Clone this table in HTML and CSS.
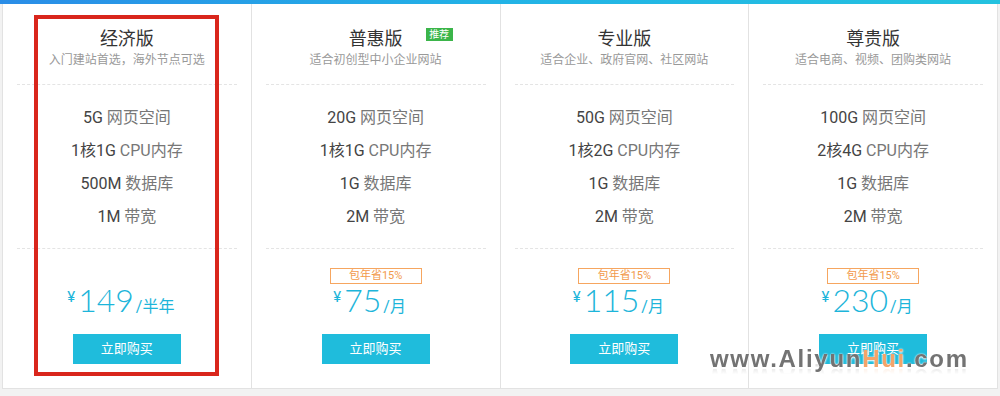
FILE: index.html
```html
<!DOCTYPE html>
<html lang="zh-CN">
<head>
<meta charset="utf-8">
<title>虚拟主机价格</title>
<link rel="stylesheet" href="styles.css">
</head>
<body>
<div class="page">
  <div class="topbar"></div>
  <div class="plans">
    <div class="plan">
      <h2 class="title">经济版</h2>
      <p class="sub">入门建站首选，海外节点可选</p>
      <div class="divider"></div>
      <ul class="features">
        <li><b>5G</b> 网页空间</li>
        <li><b>1核1G</b> CPU内存</li>
        <li><b>500M</b> 数据库</li>
        <li><b>1M</b> 带宽</li>
      </ul>
      <div class="divider"></div>
      <div class="badge-row"><span class="save hidden">包年省15%</span></div>
      <div class="price"><span class="cur">¥</span><span class="amt">149</span><span class="unit">/半年</span></div>
      <a class="buy" href="#">立即购买</a>
    </div>
    <div class="plan">
      <h2 class="title">普惠版<span class="rec">推荐</span></h2>
      <p class="sub">适合初创型中小企业网站</p>
      <div class="divider"></div>
      <ul class="features">
        <li><b>20G</b> 网页空间</li>
        <li><b>1核1G</b> CPU内存</li>
        <li><b>1G</b> 数据库</li>
        <li><b>2M</b> 带宽</li>
      </ul>
      <div class="divider"></div>
      <div class="badge-row"><span class="save">包年省15%</span></div>
      <div class="price"><span class="cur">¥</span><span class="amt">75</span><span class="unit">/月</span></div>
      <a class="buy" href="#">立即购买</a>
    </div>
    <div class="plan">
      <h2 class="title">专业版</h2>
      <p class="sub">适合企业、政府官网、社区网站</p>
      <div class="divider"></div>
      <ul class="features">
        <li><b>50G</b> 网页空间</li>
        <li><b>1核2G</b> CPU内存</li>
        <li><b>1G</b> 数据库</li>
        <li><b>2M</b> 带宽</li>
      </ul>
      <div class="divider"></div>
      <div class="badge-row"><span class="save">包年省15%</span></div>
      <div class="price"><span class="cur">¥</span><span class="amt">115</span><span class="unit">/月</span></div>
      <a class="buy" href="#">立即购买</a>
    </div>
    <div class="plan">
      <h2 class="title">尊贵版</h2>
      <p class="sub">适合电商、视频、团购类网站</p>
      <div class="divider"></div>
      <ul class="features">
        <li><b>100G</b> 网页空间</li>
        <li><b>2核4G</b> CPU内存</li>
        <li><b>1G</b> 数据库</li>
        <li><b>2M</b> 带宽</li>
      </ul>
      <div class="divider"></div>
      <div class="badge-row"><span class="save">包年省15%</span></div>
      <div class="price"><span class="cur">¥</span><span class="amt">230</span><span class="unit">/月</span></div>
      <a class="buy" href="#">立即购买</a>
    </div>
  </div>
  <div class="highlight"></div>
  <div class="watermark">www.Aliyun<span class="hui">Hui</span>.com</div>
</div>
</body>
</html>
```
FILE: styles.css
```css
* { box-sizing: border-box; }
html, body { margin: 0; padding: 0; }
body {
  background: #f2f2f2;
  font-family: "Helvetica Neue", Roboto, "Noto Sans CJK SC", sans-serif;
}
.page {
  position: relative;
  width: 1000px;
  height: 396px;
  background: #f2f2f2;
  overflow: hidden;
}
.topbar {
  height: 4px;
  background: linear-gradient(90deg, #2a8de7 0%, #22b3e6 50%, #24c2df 100%);
}
.plans {
  display: flex;
  height: 385px;
  margin: 0 2px;
  background: #fff;
  border: 1px solid #e2e2e2;
  border-top: 0;
}
.plan {
  flex: 1;
  text-align: center;
  padding-top: 23px;
  border-right: 1px solid #e2e2e2;
}
.plan:last-child { border-right: 0; }
.title {
  position: relative;
  display: inline-block;
  margin: 0;
  font-size: 18px;
  line-height: 24px;
  font-weight: normal;
  color: #333;
}
.rec {
  position: absolute;
  left: calc(100% + 23px);
  top: 1px;
  width: 27px;
  height: 13px;
  background: #3bb54a;
  color: #fff;
  font-size: 10px;
  line-height: 13px;
  text-align: center;
}
.sub {
  margin: 0;
  font-size: 12px;
  line-height: 18px;
  color: #999;
}
.divider {
  margin: 15px 14px 0;
  border-top: 1px dashed #e4e4e4;
}
.features {
  list-style: none;
  margin: 16px 0 0;
  padding: 0;
}
.features li {
  font-size: 16px;
  line-height: 33px;
  color: #777;
}
.features b {
  font-weight: normal;
  color: #444;
}
.badge-row {
  height: 16px;
  margin-top: 15px;
}
.save {
  display: inline-block;
  width: 92px;
  height: 16px;
  border: 1px solid #f6a660;
  color: #f29a4c;
  font-size: 11px;
  line-height: 14px;
}
.save.hidden { visibility: hidden; }
.price {
  display: flex;
  justify-content: center;
  align-items: baseline;
  height: 40px;
  padding-right: 12px;
  color: #1db5da;
}
.cur {
  align-self: flex-start;
  font-size: 15px;
  margin-top: 8px;
  margin-right: 3px;
}
.amt {
  font-family: Lato, Roboto, sans-serif;
  font-size: 32px;
  line-height: 40px;
  font-weight: 300;
}
.unit {
  font-size: 16px;
  margin-left: 2px;
}
.buy {
  display: inline-block;
  margin-top: 14px;
  width: 108px;
  height: 30px;
  line-height: 30px;
  background: #1fbcdc;
  color: #fff;
  font-size: 13px;
  text-decoration: none;
}
.highlight {
  position: absolute;
  left: 34px;
  top: 15px;
  width: 185px;
  height: 361px;
  border: 4px solid #d9261c;
}
.watermark {
  position: absolute;
  left: 710px;
  top: 345px;
  font-family: "Liberation Sans", Arial, sans-serif;
  font-weight: bold;
  font-size: 24px;
  line-height: 28px;
  letter-spacing: 1.7px;
  color: #737373;
  text-shadow: 0 0 2px #fff, 0 1px 2px #fff;
  -webkit-box-reflect: below -10px linear-gradient(transparent 60%, rgba(255,255,255,0.3));
}
.watermark .hui { color: #f3a46a; }
```
